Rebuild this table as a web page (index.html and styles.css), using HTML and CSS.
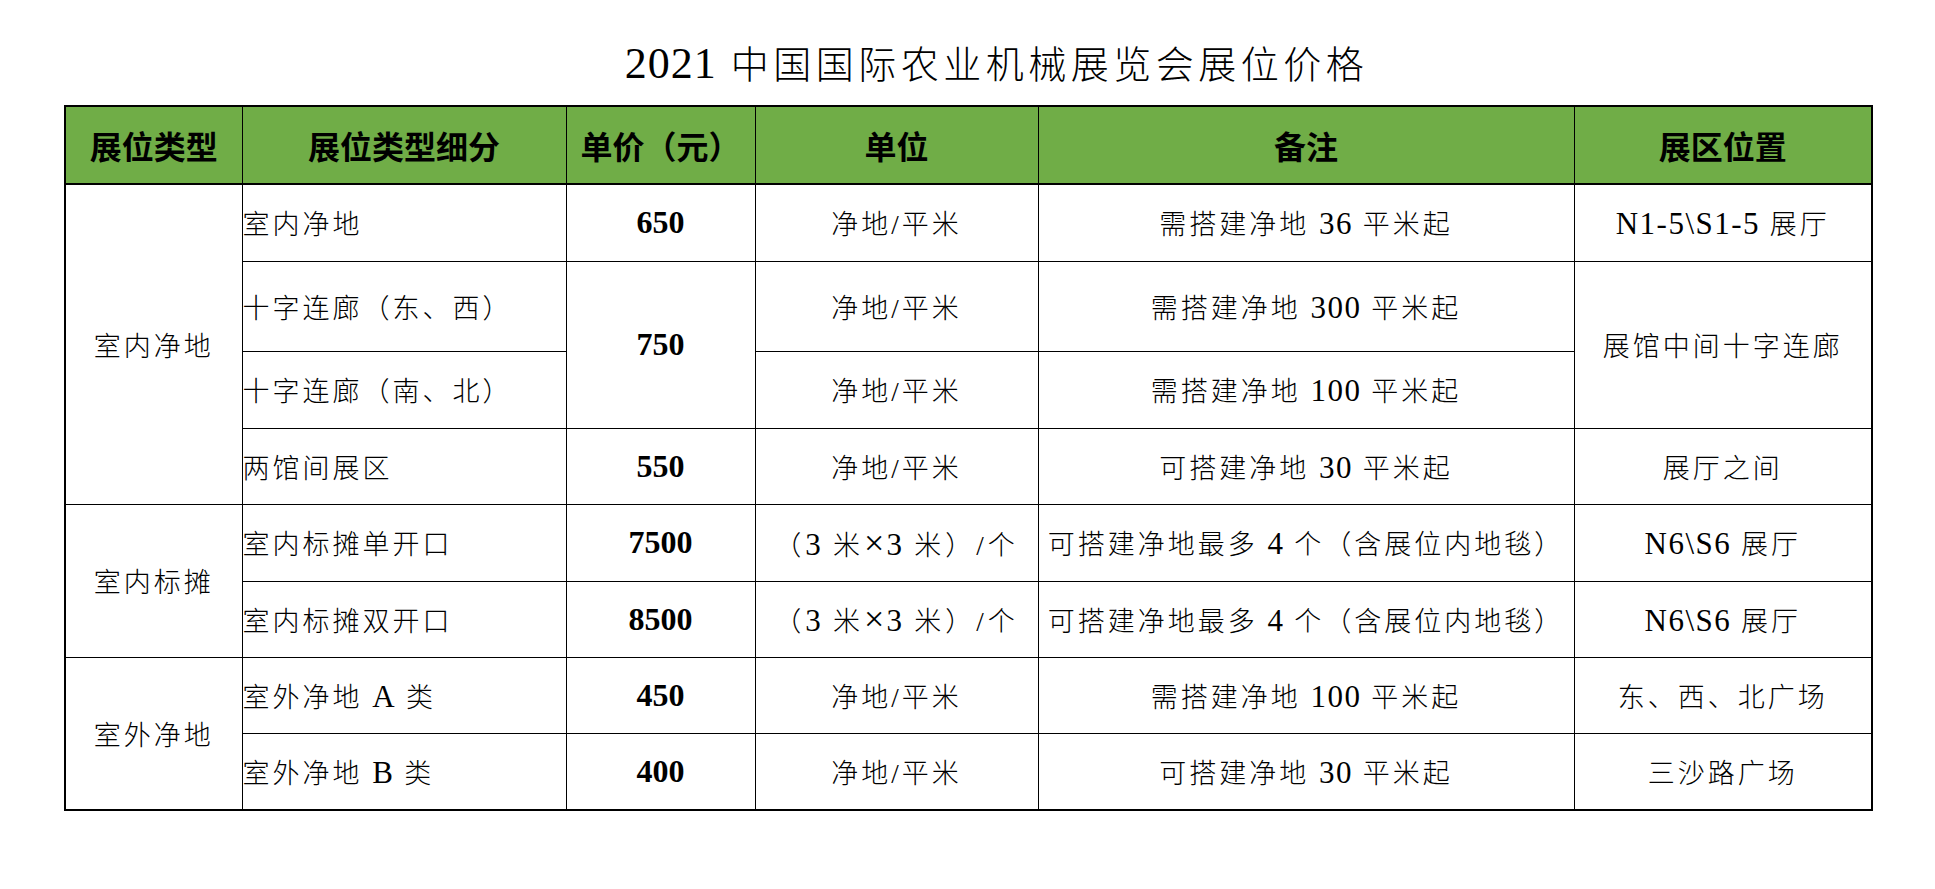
FILE: index.html
```html
<!DOCTYPE html>
<html lang="zh-CN">
<head>
<meta charset="utf-8">
<title>2021 中国国际农业机械展览会展位价格</title>
<link rel="stylesheet" href="styles.css">
</head>
<body>
<div class="page">
  <h1 class="title"><span class="title-num">2021</span> 中国国际农业机械展览会展位价格</h1>
  <table class="price-table">
    <colgroup>
      <col class="c1"><col class="c2"><col class="c3"><col class="c4"><col class="c5"><col class="c6">
    </colgroup>
    <thead>
      <tr class="row-head">
        <th>展位类型</th>
        <th>展位类型细分</th>
        <th>单价（元）</th>
        <th>单位</th>
        <th>备注</th>
        <th>展区位置</th>
      </tr>
    </thead>
    <tbody>
      <tr class="row-b">
        <td class="cat" rowspan="4">室内净地</td>
        <td class="sub">室内净地</td>
        <td class="num">650</td>
        <td class="ctr">净地/平米</td>
        <td class="ctr">需搭建净地 <span class="lat">36</span> 平米起</td>
        <td class="ctr"><span class="lat">N1-5\S1-5</span> 展厅</td>
      </tr>
      <tr class="row-tall">
        <td class="sub">十字连廊（东、西）</td>
        <td class="num" rowspan="2">750</td>
        <td class="ctr">净地/平米</td>
        <td class="ctr">需搭建净地 <span class="lat">300</span> 平米起</td>
        <td class="ctr" rowspan="2">展馆中间十字连廊</td>
      </tr>
      <tr class="row-b">
        <td class="sub">十字连廊（南、北）</td>
        <td class="ctr">净地/平米</td>
        <td class="ctr">需搭建净地 <span class="lat">100</span> 平米起</td>
      </tr>
      <tr class="row">
        <td class="sub">两馆间展区</td>
        <td class="num">550</td>
        <td class="ctr">净地/平米</td>
        <td class="ctr">可搭建净地 <span class="lat">30</span> 平米起</td>
        <td class="ctr">展厅之间</td>
      </tr>
      <tr class="row-b">
        <td class="cat" rowspan="2">室内标摊</td>
        <td class="sub">室内标摊单开口</td>
        <td class="num">7500</td>
        <td class="ctr unit-wide">（<span class="lat">3</span> 米<span class="times">×</span><span class="lat">3</span> 米）/个</td>
        <td class="ctr">可搭建净地最多 <span class="lat">4</span> 个（含展位内地毯）</td>
        <td class="ctr"><span class="lat">N6\S6</span> 展厅</td>
      </tr>
      <tr class="row">
        <td class="sub">室内标摊双开口</td>
        <td class="num">8500</td>
        <td class="ctr unit-wide">（<span class="lat">3</span> 米<span class="times">×</span><span class="lat">3</span> 米）/个</td>
        <td class="ctr">可搭建净地最多 <span class="lat">4</span> 个（含展位内地毯）</td>
        <td class="ctr"><span class="lat">N6\S6</span> 展厅</td>
      </tr>
      <tr class="row">
        <td class="cat" rowspan="2">室外净地</td>
        <td class="sub">室外净地 <span class="lat">A</span> 类</td>
        <td class="num">450</td>
        <td class="ctr">净地/平米</td>
        <td class="ctr">需搭建净地 <span class="lat">100</span> 平米起</td>
        <td class="ctr">东、西、北广场</td>
      </tr>
      <tr class="row-b">
        <td class="sub">室外净地 <span class="lat">B</span> 类</td>
        <td class="num">400</td>
        <td class="ctr">净地/平米</td>
        <td class="ctr">可搭建净地 <span class="lat">30</span> 平米起</td>
        <td class="ctr">三沙路广场</td>
      </tr>
    </tbody>
  </table>
</div>
</body>
</html>
```
FILE: styles.css
```css
html, body {
  margin: 0;
  padding: 0;
  background: #ffffff;
}

body {
  font-family: "Liberation Serif", "Noto Sans CJK SC", serif;
  color: #000000;
}

.page {
  padding: 38px 0 0 64px;
}

.title {
  box-sizing: border-box;
  width: 1807px;
  margin: 0 0 15px 0;
  padding-left: 58px;
  height: 52px;
  line-height: 52px;
  text-align: center;
  font-size: 38px;
  font-weight: 300;
  letter-spacing: 4.5px;
  white-space: nowrap;
}

.title-num {
  font-size: 44px;
  letter-spacing: 1px;
}

.price-table {
  width: 1807px;
  border-collapse: collapse;
  table-layout: fixed;
  border: 2px solid #000000;
}

.c1 { width: 177px; }
.c2 { width: 324px; }
.c3 { width: 189px; }
.c4 { width: 283px; }
.c5 { width: 536px; }
.c6 { width: 298px; }

.price-table th,
.price-table td {
  border: 1px solid #000000;
  padding: 0;
  vertical-align: middle;
  white-space: nowrap;
  overflow: hidden;
}

.price-table th {
  background: #70ad47;
  font-size: 32px;
  font-weight: bold;
  letter-spacing: 0;
  text-align: center;
  border-bottom: 2px solid #000000;
}

.price-table td {
  font-size: 27px;
  font-weight: 300;
  letter-spacing: 3px;
}

.lat {
  font-size: 31px;
  letter-spacing: 1.5px;
}

.price-table td.unit-wide {
  letter-spacing: 4px;
}

.times {
  font-size: 36px;
  letter-spacing: 2px;
}

.row-head { height: 78px; }
.row { height: 76px; }
.row-b { height: 77px; }
.row-tall { height: 90px; }

.cat {
  text-align: center;
  padding-left: 3px;
}

.sub {
  text-align: left;
  padding-left: 2px;
}

.ctr {
  text-align: center;
  padding-left: 3px;
}

.price-table td.num {
  text-align: center;
  font-size: 32px;
  font-weight: bold;
  letter-spacing: 0;
}
```
